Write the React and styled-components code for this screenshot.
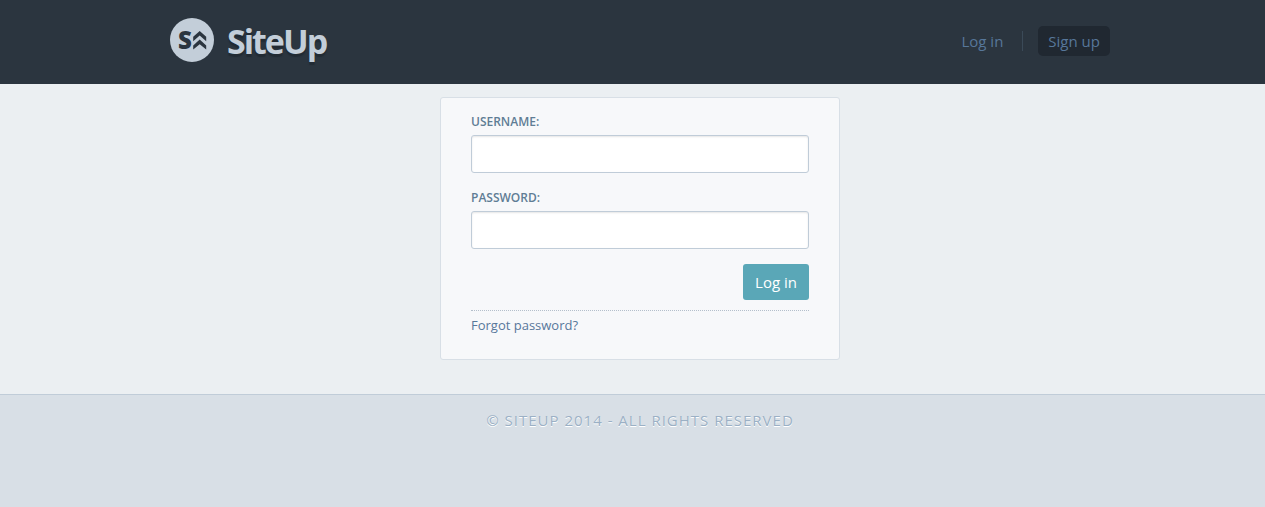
import React from "react";
import styled, { createGlobalStyle } from "styled-components";

const GlobalStyle = createGlobalStyle`
  *, *::before, *::after { box-sizing: border-box; }
  html { background: #d8dfe6; }
  body {
    margin: 0;
    font-family: "Open Sans", "Liberation Sans", sans-serif;
    font-size: 15px;
    line-height: 20px;
    color: #5f7d95;
  }
`;

const Header = styled.header`
  background: #2b353f;
  padding: 17px 0 21px 15px;
`;

const HeaderInner = styled.div`
  max-width: 940px;
  margin: 0 auto;
  display: flex;
  align-items: center;
  justify-content: space-between;
`;

const Brand = styled.a`
  display: flex;
  align-items: center;
  gap: 13px;
  color: #c3ced9;
  text-decoration: none;
  font-size: 34px;
  font-weight: 700;
  line-height: 44px;
  letter-spacing: -2px;
  text-shadow: 0 3px 1px #222b34;
`;

const BrandMark = styled.svg`
  display: block;
  width: 44px;
  height: 44px;
`;

const BrandName = styled.span`
  padding-top: 2px;
`;

const Nav = styled.nav`
  display: flex;
  align-items: center;
  padding-top: 2px;
`;

const NavLink = styled.a`
  padding: 5px 10px;
  border-radius: 5px;
  color: #57779a;
  background: ${(p) => (p.$filled ? "#202831" : "transparent")};
  text-decoration: none;
`;

const Divider = styled.span`
  width: 1px;
  height: 20px;
  margin: 0 15px 0 9px;
  background: #3b4a58;
`;

const Main = styled.main`
  background: #ebeff2;
  padding: 13px 0 34px 15px;
`;

const Card = styled.form`
  max-width: 400px;
  margin: 0 auto;
  padding: 14px 30px 24px;
  background: #f7f8fa;
  border: 1px solid #d8dfe6;
  border-radius: 3px;
`;

const Field = styled.div`
  margin-bottom: 15px;
`;

const Label = styled.label`
  display: block;
  margin-bottom: 3px;
  font-size: 12px;
  font-weight: 600;
  line-height: 20px;
  text-transform: uppercase;
`;

const TextInput = styled.input`
  display: block;
  width: 100%;
  height: 38px;
  padding: 8px 10px;
  border: 1px solid #c0ccd8;
  border-radius: 3px;
  background: #fff;
  box-shadow: inset 0 1px 2px rgba(0, 0, 0, 0.1);
  font: inherit;
  color: inherit;
`;

const Actions = styled.div`
  display: flex;
  justify-content: flex-end;
  padding-bottom: 10px;
  border-bottom: 1px dotted #b4bfcb;
`;

const SubmitButton = styled.button`
  padding: 8px 12px;
  border: 0;
  border-radius: 3px;
  background: #5aa7b7;
  color: #fff;
  font: inherit;
  cursor: pointer;
`;

const ForgotLink = styled.a`
  display: inline-block;
  margin-top: 4px;
  font-size: 13px;
  line-height: 20px;
  color: #57779a;
  text-decoration: none;
`;

const Footer = styled.footer`
  padding: 15px 0 77px 15px;
  border-top: 1px solid #c0ccd8;
  background: #d8dfe6;
  color: #9bb0c5;
  text-align: center;
  text-transform: uppercase;
  letter-spacing: 1px;
  text-shadow: 0 1px 0 #fff;
`;

const MarkLetter = styled.text`
  fill: #2b353f;
  font-size: 24px;
  font-weight: 800;
  letter-spacing: 0;
  text-shadow: none;
`;

function Logo() {
  return (
    <BrandMark viewBox="0 0 44 44" aria-hidden="true">
      <circle cx="22" cy="22" r="22" fill="#c3ced9" />
      <MarkLetter x="8" y="31">S</MarkLetter>
      <path
        d="M29.7 13L36.2 18.8V23.2L29.7 17.6L23.2 23.2V18.8ZM29.7 21.6L36.2 27.4V31.6L29.7 26.2L23.2 31.6V27.4Z"
        fill="#2b353f"
      />
    </BrandMark>
  );
}

export default function App() {
  return (
    <>
      <GlobalStyle />
      <Header>
        <HeaderInner>
          <Brand href="#">
            <Logo />
            <BrandName>SiteUp</BrandName>
          </Brand>
          <Nav>
            <NavLink href="#login">Log in</NavLink>
            <Divider />
            <NavLink href="#signup" $filled>Sign up</NavLink>
          </Nav>
        </HeaderInner>
      </Header>
      <Main>
        <Card onSubmit={(e) => e.preventDefault()}>
          <Field>
            <Label htmlFor="username">Username:</Label>
            <TextInput id="username" name="username" type="text" />
          </Field>
          <Field>
            <Label htmlFor="password">Password:</Label>
            <TextInput id="password" name="password" type="password" />
          </Field>
          <Actions>
            <SubmitButton type="submit">Log in</SubmitButton>
          </Actions>
          <ForgotLink href="#forgot">Forgot password?</ForgotLink>
        </Card>
      </Main>
      <Footer>© SiteUp 2014 - All rights reserved</Footer>
    </>
  );
}
